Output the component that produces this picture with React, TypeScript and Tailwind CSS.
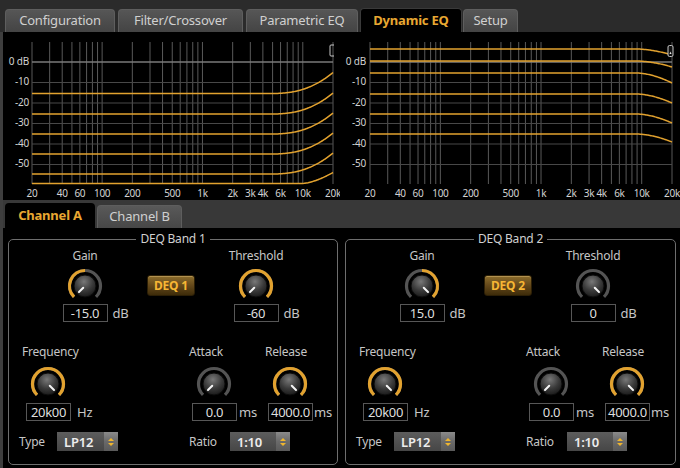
import React from 'react';

const ORANGE = '#e2a22f';

const mainTabs = [
  { label: 'Configuration', cls: 'w-[110px] mr-[3px]' },
  { label: 'Filter/Crossover', cls: 'w-[125px] mr-[3px]' },
  { label: 'Parametric EQ', cls: 'w-[112px] mr-[2px]' },
  { label: 'Dynamic EQ', cls: 'w-[102px] mr-[1px]', active: true },
  { label: 'Setup', cls: 'w-[55px]' },
];

const gridFreqs = [
  20, 30, 40, 50, 60, 70, 80, 90, 100, 200, 300, 400, 500, 600, 700, 800, 900, 1000, 2000, 3000,
  4000, 5000, 6000, 7000, 8000, 9000, 10000, 20000,
];

const freqLabels: [number, string][] = [
  [20, '20'], [40, '40'], [60, '60'], [100, '100'], [200, '200'], [500, '500'], [1000, '1k'],
  [2000, '2k'], [3000, '3k'], [4000, '4k'], [6000, '6k'], [10000, '10k'], [20000, '20k'],
];

const dbLines = [0, -10, -20, -30, -40, -50];
const dbY = (db: number) => 62 - db * 2.05;

type ChartProps = {
  x0: number;
  span: number;
  labelX: number;
  view: string;
  width: number;
  curves: string[];
  icon: 'bracket' | 'box';
};

function Chart({ x0, span, labelX, view, width, curves, icon }: ChartProps) {
  const fx = (f: number) => x0 + (span / 3) * Math.log10(f / 20);
  const xEnd = x0 + span;
  return (
    <svg width={width} height={168} viewBox={view} className="block">
      {gridFreqs.map((f) => (
        <line key={f} x1={fx(f)} x2={fx(f)} y1={42} y2={184} stroke="#595959" strokeWidth={1} />
      ))}
      {dbLines.map((d) => (
        <line
          key={d}
          x1={x0}
          x2={xEnd}
          y1={dbY(d)}
          y2={dbY(d)}
          stroke={d === 0 ? '#7a7a7a' : '#484848'}
          strokeWidth={d === 0 ? 1.5 : 1}
        />
      ))}
      {dbLines.map((d) => (
        <text
          key={d}
          x={labelX}
          y={dbY(d)}
          textAnchor="end"
          dominantBaseline="middle"
          fontSize={10}
          fill="#d2d2d2"
          fontFamily="Noto Sans, sans-serif"
        >
          {d === 0 ? '0 dB' : d}
        </text>
      ))}
      {freqLabels.map(([f, t]) => (
        <text
          key={t}
          x={fx(f)}
          y={194}
          textAnchor="middle"
          dominantBaseline="middle"
          fontSize={10}
          fill="#d2d2d2"
          fontFamily="Noto Sans, sans-serif"
          letterSpacing={-0.3}
        >
          {t}
        </text>
      ))}
      {curves.map((d, i) => (
        <path key={i} d={d} fill="none" stroke={ORANGE} strokeWidth={1.5} />
      ))}
      {icon === 'bracket' ? (
        <path d={`M${xEnd + 1} 45 H${xEnd - 2} Q${xEnd - 3} 45 ${xEnd - 3} 46 V55 Q${xEnd - 3} 56 ${xEnd - 2} 56 H${xEnd + 1}`} fill="none" stroke="#c8c8c8" strokeWidth={1} />
      ) : (
        <g>
          <rect x={xEnd - 4} y={45.5} width={5} height={11} rx={1.5} fill="#111" stroke="#c8c8c8" strokeWidth={1} />
          <path d={`M${xEnd - 2.5} 54 L${xEnd - 0.5} 54 L${xEnd - 1.5} 51.5 Z`} fill="#e8e8e8" />
        </g>
      )}
    </svg>
  );
}

// left chart: flat lines rising at the high end
function leftCurves() {
  const out: string[] = [];
  [93.5, 114, 134, 154, 174].forEach((base) => {
    let d = `M32 ${base}`;
    for (let x = 268; x <= 333; x += 1) {
      const r = x < 270 ? 0 : 21 * Math.pow((x - 270) / 63, 2.5);
      d += ` L${x} ${(base - r).toFixed(2)}`;
    }
    out.push(d);
  });
  let last = 'M32 183.5';
  for (let x = 302; x <= 333; x += 1) {
    last += ` L${x} ${(183.5 - 11 * Math.pow((x - 302) / 31, 1.6)).toFixed(2)}`;
  }
  out.push(last);
  return out;
}

// right chart: flat lines dropping at the high end
function rightCurves() {
  const bases = [49, 61, 73, 94, 114, 134];
  const drops = [6, 6, 10, 9, 9, 8];
  return bases.map((base, i) => {
    let d = `M370 ${base}`;
    for (let x = 634; x <= 672; x += 1) {
      const r = x < 636 ? 0 : drops[i] * Math.pow((x - 636) / 36, 1.8);
      d += ` L${x} ${(base + r).toFixed(2)}`;
    }
    return d;
  });
}

function pt(a: number, r: number) {
  const t = (a * Math.PI) / 180;
  return [18 + r * Math.sin(t), 18 - r * Math.cos(t)];
}

function arcPath(a1: number, a2: number, r: number) {
  const [x1, y1] = pt(a1, r);
  const [x2, y2] = pt(a2, r);
  const large = a2 - a1 > 180 ? 1 : 0;
  return `M${x1} ${y1} A${r} ${r} 0 ${large} 1 ${x2} ${y2}`;
}

function Knob({ pointer, arc, className }: { pointer: number; arc?: [number, number]; className?: string }) {
  const [px1, py1] = pt(pointer, 2.5);
  const [px2, py2] = pt(pointer, 8.5);
  return (
    <svg width={36} height={36} viewBox="0 0 36 36" className={className}>
      <defs>
        <radialGradient id="knobFace" cx="45%" cy="30%" r="75%">
          <stop offset="0" stopColor="#787878" />
          <stop offset="0.55" stopColor="#3a3a3a" />
          <stop offset="1" stopColor="#161616" />
        </radialGradient>
      </defs>
      <path d={arcPath(-135, 135, 15.5)} fill="none" stroke="#545454" strokeWidth={3.2} />
      {arc && <path d={arcPath(arc[0], arc[1], 15.5)} fill="none" stroke={ORANGE} strokeWidth={3.2} />}
      <circle cx={18} cy={18} r={11} fill="url(#knobFace)" stroke="#0c0c0c" strokeWidth={1} />
      <line x1={px1} y1={py1} x2={px2} y2={py2} stroke="#f4f4f4" strokeWidth={2} strokeLinecap="round" />
    </svg>
  );
}

function ValueBox({ value }: { value: string }) {
  return (
    <span className="flex h-[18px] w-[45px] items-center justify-center border border-[#575757] bg-black text-[13px] leading-[16px] tracking-[-0.3px] text-[#dedede]">
      {value}
    </span>
  );
}

function Label({ children }: { children: React.ReactNode }) {
  return <span className="h-[16px] text-[12px] leading-[16px] text-[#c6c6c6]">{children}</span>;
}

function Select({ value, w }: { value: string; w: string }) {
  return (
    <div
      className={`flex h-[19px] ${w} items-center justify-between bg-linear-to-b from-[#5d5d5d] to-[#464646] pl-[7px] text-[13px] leading-[16px] font-semibold text-[#ededed]`}
    >
      {value}
      <span className="flex h-full w-[14px] items-center justify-center bg-linear-to-b from-[#8a8a8a] via-[#6a6a6a] to-[#5a5a5a]">
        <svg width={6} height={10} viewBox="0 0 6 10">
          <path d="M0 4 L3 1 L6 4 Z" fill="#efb62f" />
          <path d="M0 6 L3 9 L6 6 Z" fill="#efb62f" />
        </svg>
      </span>
    </div>
  );
}

type BandProps = {
  title: string;
  deq: string;
  gain: string;
  gainKnob: { pointer: number; arc?: [number, number] };
  threshold: string;
  thresholdKnob: { pointer: number; arc?: [number, number] };
  width: string;
};

function Band({ title, deq, gain, gainKnob, threshold, thresholdKnob, width }: BandProps) {
  return (
    <fieldset className={`${width} rounded-[5px] border border-[#6e6e6e] px-0 pb-[13px] pt-[1px]`}>
      <legend className="mx-auto px-[4px] text-[12px] leading-[16px] text-[#d0d0d0]">{title}</legend>

      {/* gain / deq / threshold */}
      <div className="flex items-start pl-[36px]">
        <div className="flex w-[80px] flex-col items-center">
          <Label>Gain</Label>
          <Knob className="mt-[4px]" {...gainKnob} />
          <div className="flex h-[18px] items-center">
            <span className="w-[20px]" />
            <ValueBox value={gain} />
            <span className="w-[20px] pl-[5px] text-[13px] leading-[16px] text-[#c6c6c6]">dB</span>
          </div>
        </div>
        <button className="ml-[22px] mt-[27px] flex h-[21px] w-[48px] items-center justify-center rounded-[3px] border border-[#2c1f06] bg-linear-to-b from-[#8c6d2c] via-[#64481a] to-[#3e2c0a] text-[12px] font-bold text-[#f6b634] shadow-[inset_0_1px_0_rgba(255,220,150,0.35)]">
          {deq}
        </button>
        <div className="ml-[21px] flex w-[80px] flex-col items-center">
          <Label>Threshold</Label>
          <Knob className="mt-[4px]" {...thresholdKnob} />
          <div className="flex h-[18px] items-center">
            <span className="w-[20px]" />
            <ValueBox value={threshold} />
            <span className="w-[20px] pl-[5px] text-[13px] leading-[16px] text-[#c6c6c6]">dB</span>
          </div>
        </div>
      </div>

      {/* frequency / attack / release */}
      <div className="mt-[22px] flex items-start pl-[13px]">
        <div className="flex w-[167px] flex-col items-start">
          <Label>Frequency</Label>
          <Knob className="ml-[8px] mt-[6px]" pointer={135} arc={[-135, 135]} />
          <div className="ml-[4px] mt-[1px] flex h-[18px] items-center">
            <ValueBox value="20k00" />
            <span className="ml-[6px] text-[13px] leading-[16px] text-[#c6c6c6]">Hz</span>
          </div>
        </div>
        <div className="flex w-[76px] flex-col items-start">
          <Label>Attack</Label>
          <Knob className="ml-[7px] mt-[6px]" pointer={-135} />
          <div className="ml-[3px] mt-[1px] flex h-[18px] items-center">
            <ValueBox value="0.0" />
            <span className="ml-[2px] text-[13px] leading-[16px] text-[#c6c6c6]">ms</span>
          </div>
        </div>
        <div className="flex flex-col items-start">
          <Label>Release</Label>
          <Knob className="ml-[7px] mt-[6px]" pointer={135} arc={[-135, 135]} />
          <div className="ml-[3px] mt-[1px] flex h-[18px] items-center">
            <ValueBox value="4000.0" />
            <span className="ml-[1px] text-[13px] leading-[16px] text-[#c6c6c6]">ms</span>
          </div>
        </div>
      </div>

      {/* type / ratio */}
      <div className="mt-[11px] flex h-[19px] items-center pl-[10px] text-[12px] leading-[16px] text-[#c6c6c6]">
        <span className="w-[38px]">Type</span>
        <Select value="LP12" w="w-[61px]" />
        <span className="ml-[71px] w-[41px]">Ratio</span>
        <Select value="1:10" w="w-[60px]" />
      </div>
    </fieldset>
  );
}

export default function App() {
  return (
    <div className="h-[468px] w-[680px] overflow-hidden bg-[#2b2b2b] font-['Noto_Sans',sans-serif] tracking-[-0.2px]">
      {/* main tabs */}
      <div className="flex h-[32px] items-end pl-[5px]">
        {mainTabs.map((t) =>
          t.active ? (
            <div
              key={t.label}
              className={`${t.cls} flex h-[24px] items-center justify-center rounded-t-[4px] border border-b-0 border-[#3a3a3a] bg-black text-[13px] font-bold text-[#e8a832]`}
            >
              {t.label}
            </div>
          ) : (
            <div
              key={t.label}
              className={`${t.cls} flex h-[23px] items-center justify-center rounded-t-[4px] border border-b-0 border-[#5e5e5e] bg-linear-to-b from-[#565656] to-[#444] text-[13px] text-[#d0d0d0]`}
            >
              {t.label}
            </div>
          ),
        )}
      </div>

      <div className="flex h-[436px] flex-col border-l-[3px] border-[#3e3e3e]">
        {/* response charts */}
        <div className="flex h-[168px] bg-black">
          <Chart x0={32} span={301} labelX={29} view="3 32 337 168" width={337} curves={leftCurves()} icon="bracket" />
          <Chart x0={370} span={302} labelX={366} view="340 32 340 168" width={340} curves={rightCurves()} icon="box" />
        </div>

        {/* channel tabs */}
        <div className="flex h-[28px] items-end bg-[#383838] pl-[2px]">
          <div className="flex h-[25px] w-[90px] items-center justify-center rounded-t-[4px] bg-black text-[13px] font-bold text-[#e8a832]">
            Channel A
          </div>
          <div className="ml-[2px] flex h-[23px] w-[85px] items-center justify-center rounded-t-[4px] border border-b-0 border-[#5e5e5e] bg-linear-to-b from-[#595959] to-[#474747] text-[13px] text-[#d0d0d0]">
            Channel B
          </div>
        </div>

        {/* bands */}
        <div className="flex flex-1 items-start gap-[7px] bg-black pl-[5px] pt-[3px]">
          <Band
            title="DEQ Band 1"
            deq="DEQ 1"
            gain="-15.0"
            gainKnob={{ pointer: -135, arc: [-135, 0] }}
            threshold="-60"
            thresholdKnob={{ pointer: -135, arc: [-135, 135] }}
            width="w-[330px]"
          />
          <Band
            title="DEQ Band 2"
            deq="DEQ 2"
            gain="15.0"
            gainKnob={{ pointer: 135, arc: [0, 135] }}
            threshold="0"
            thresholdKnob={{ pointer: 135 }}
            width="w-[331px]"
          />
        </div>
      </div>
    </div>
  );
}
